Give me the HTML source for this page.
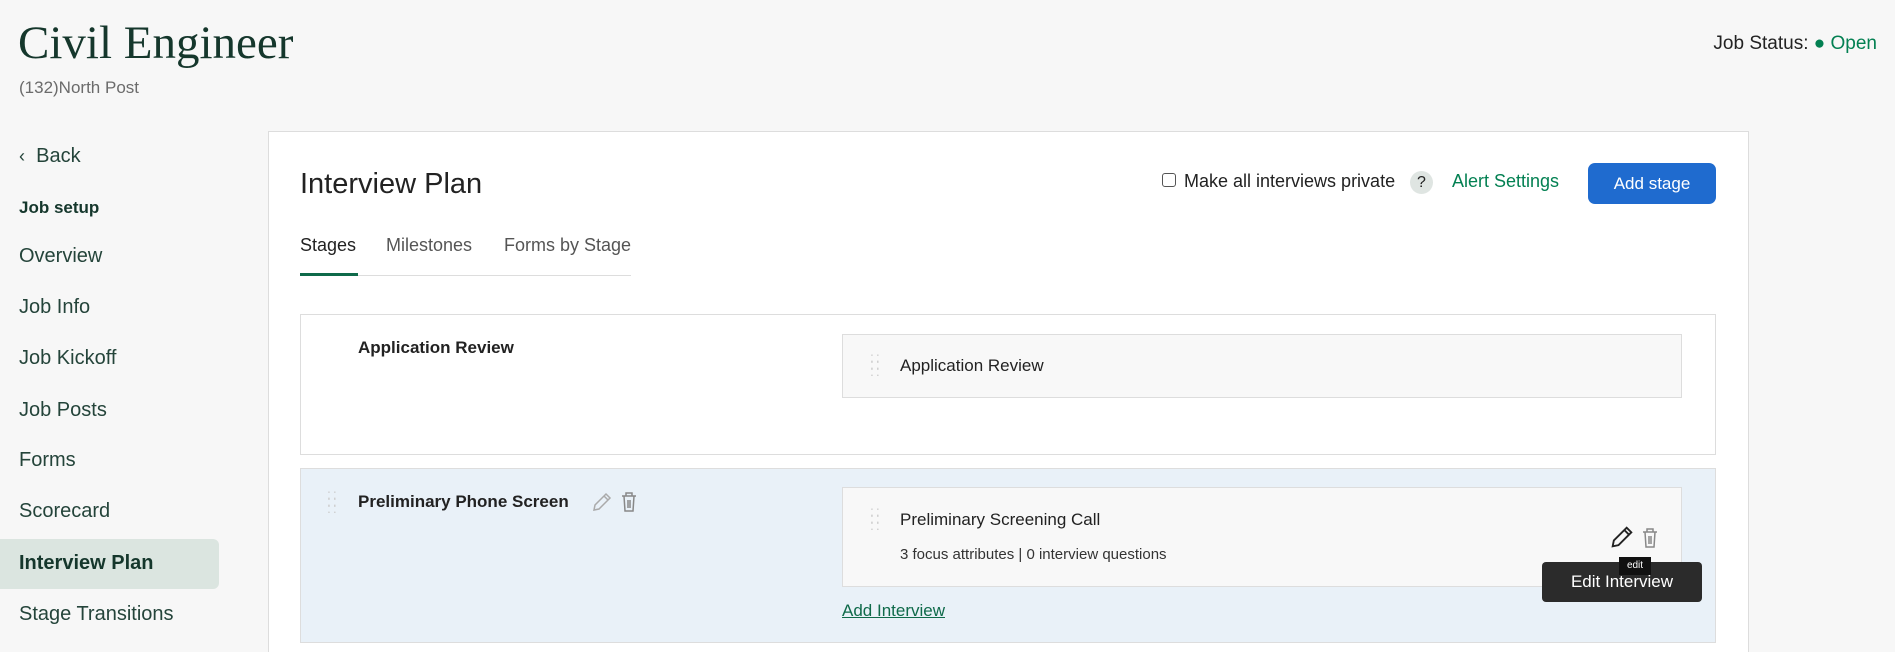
<!DOCTYPE html>
<html><head><style>
*{box-sizing:border-box;margin:0;padding:0}
html,body{width:1895px;height:652px;overflow:hidden}
body{background:#f7f7f7;font-family:"Liberation Sans",sans-serif;color:#222;position:relative}
.a{position:absolute;white-space:nowrap}
.nav{left:19px;font-size:20px;color:#24443a}
</style></head><body>
<div class="a" style="left:18px;top:16px;font-family:'Liberation Serif',serif;font-size:47px;color:#15372c">Civil Engineer</div>
<div class="a" style="left:19px;top:78px;font-size:17px;color:#6b6b6b">(132)North Post</div>
<div class="a" style="right:18px;top:33px;font-size:19px;color:#222">Job Status: <span style="color:#038052">● Open</span></div>

<div class="a nav" style="top:145px"><span style="font-size:18px">&#8249;</span>&nbsp; Back</div>
<div class="a nav" style="top:198px;font-size:17px;font-weight:bold;color:#15372c">Job setup</div>
<div class="a nav" style="top:245px">Overview</div>
<div class="a nav" style="top:296px">Job Info</div>
<div class="a nav" style="top:347px">Job Kickoff</div>
<div class="a nav" style="top:399px">Job Posts</div>
<div class="a nav" style="top:449px">Forms</div>
<div class="a nav" style="top:500px">Scorecard</div>
<div class="a" style="left:0;top:539px;width:219px;height:50px;background:#dbe5e0;border-radius:0 6px 6px 0"></div>
<div class="a nav" style="top:552px;font-weight:bold;color:#15372c">Interview Plan</div>
<div class="a nav" style="top:603px">Stage Transitions</div>

<div class="a" style="left:268px;top:131px;width:1481px;height:521px;background:#fff;border:1px solid #ddd;border-bottom:none"></div>
<div class="a" style="left:300px;top:168px;font-size:29px;color:#222">Interview Plan</div>
<div class="a" style="left:300px;top:235px;font-size:18px;color:#222">Stages</div>
<div class="a" style="left:386px;top:235px;font-size:18px;color:#555">Milestones</div>
<div class="a" style="left:504px;top:235px;font-size:18px;color:#555">Forms by Stage</div>
<div class="a" style="left:300px;top:275px;width:331px;height:1px;background:#ddd"></div>
<div class="a" style="left:300px;top:273px;width:58px;height:3px;background:#0f6a4a"></div>

<div class="a" style="left:1162px;top:173px;width:14px;height:14px;border:1.5px solid #555;border-radius:3px"></div>
<div class="a" style="left:1184px;top:171px;font-size:18px">Make all interviews private</div>
<div class="a" style="left:1410px;top:171px;width:23px;height:23px;border-radius:50%;background:#dfe5e2;font-size:16px;text-align:center;line-height:23px">?</div>
<div class="a" style="left:1452px;top:171px;font-size:18px;color:#038052">Alert Settings</div>
<div class="a" style="left:1588px;top:163px;width:128px;height:41px;background:#1f6bcf;border-radius:7px;color:#fff;font-size:17px;text-align:center;line-height:41px">Add stage</div>

<div class="a" style="left:300px;top:314px;width:1416px;height:141px;border:1px solid #ddd;background:#fff"></div>
<div class="a" style="left:358px;top:338px;font-size:17px;font-weight:bold">Application Review</div>
<div class="a" style="left:842px;top:334px;width:840px;height:64px;border:1px solid #ddd;background:#f8f8f8"></div>
<div class="a" style="left:870px;top:354px;font-size:14px;color:#ccc;line-height:7px;letter-spacing:2px">::<br>::<br>::</div>
<div class="a" style="left:900px;top:356px;font-size:17px">Application Review</div>

<div class="a" style="left:300px;top:468px;width:1416px;height:175px;border:1px solid #ddd;background:#e9f1f8"></div>
<div class="a" style="left:327px;top:491px;font-size:14px;color:#ccc;line-height:7px;letter-spacing:2px">::<br>::<br>::</div>
<div class="a" style="left:358px;top:492px;font-size:17px;font-weight:bold">Preliminary Phone Screen</div>
<svg class="a" style="left:590px;top:490px" width="24" height="24" viewBox="0 0 24 24" fill="none" stroke="#aaa" stroke-width="1.5"><path d="M4 20l1-5L16 4l4 4L9 19z M14 6l4 4"/></svg>
<svg class="a" style="left:619px;top:490px" width="20" height="24" viewBox="0 0 20 24" fill="none" stroke="#888" stroke-width="1.5"><path d="M3 6h14M7 6V3h6v3M5 6l1 15h8l1-15M9 10v8M11 10v8"/></svg>
<div class="a" style="left:842px;top:487px;width:840px;height:100px;border:1px solid #ddd;background:#f8f8f8"></div>
<div class="a" style="left:870px;top:508px;font-size:14px;color:#ccc;line-height:7px;letter-spacing:2px">::<br>::<br>::</div>
<div class="a" style="left:900px;top:510px;font-size:17px">Preliminary Screening Call</div>
<div class="a" style="left:900px;top:546px;font-size:15px;color:#333">3 focus attributes | 0 interview questions</div>
<svg class="a" style="left:1608px;top:523px" width="28" height="28" viewBox="0 0 24 24" fill="none" stroke="#222" stroke-width="1.6"><path d="M4 20l1-5L16 4l4 4L9 19z M14 6l4 4"/></svg>
<svg class="a" style="left:1640px;top:525px" width="20" height="26" viewBox="0 0 20 24" fill="none" stroke="#888" stroke-width="1.5"><path d="M3 6h14M7 6V3h6v3M5 6l1 15h8l1-15M9 10v8M11 10v8"/></svg>
<div class="a" style="left:1542px;top:562px;width:160px;height:40px;background:#2b2b2b;border-radius:4px;color:#fff;font-size:17px;text-align:center;line-height:40px">Edit Interview</div>
<div class="a" style="left:1619px;top:557px;width:32px;height:18px;background:#111;color:#fff;font-size:10px;text-align:center;line-height:18px">edit</div>
<div class="a" style="left:842px;top:601px;font-size:17px;color:#0f6a4a;text-decoration:underline">Add Interview</div>
</body></html>
